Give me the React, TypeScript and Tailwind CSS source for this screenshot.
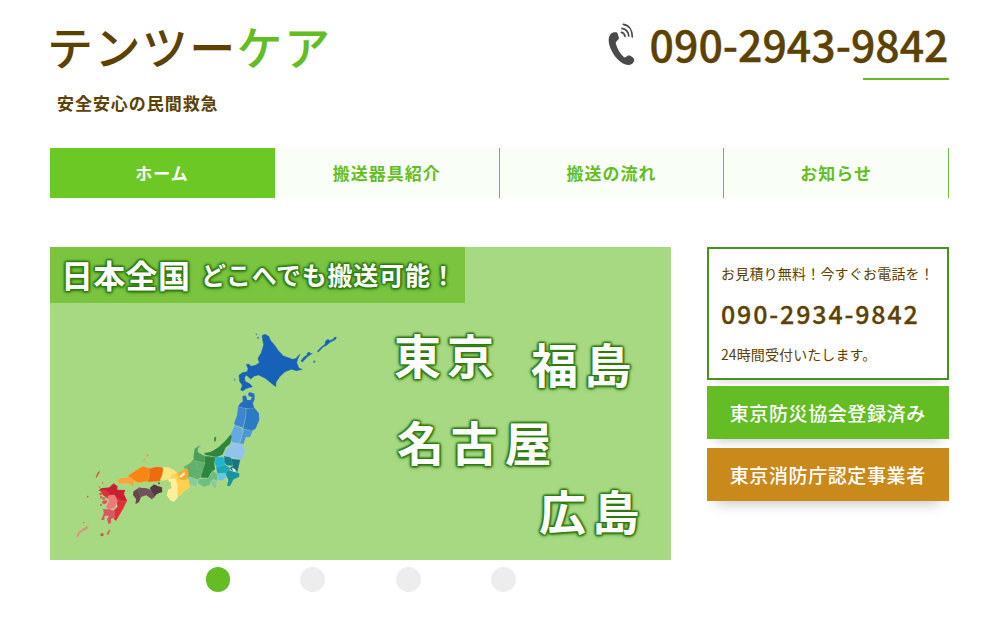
const navItems = ["ホーム", "搬送器具紹介", "搬送の流れ", "お知らせ"];

const outline =
  "[text-shadow:0_0_2px_#2f7a10,0_0_3px_#2f7a10,1px_1px_2px_#2f7a10,-1px_1px_2px_#2f7a10,1px_-1px_2px_#2f7a10,-1px_-1px_2px_#2f7a10,0_1px_4px_#2f7a10]";

function PhoneIcon() {
  return (
    <svg className="block h-[44px] w-[28px]" viewBox="0 0 84 132" aria-hidden="true">
      <path
        d="M8 33 C13 28 20 27 28 29 L33 45 C33 50 25 53 23 60 C27 77 36 92 48 103 C53 105 57 98 63 97 C70 99 77 105 79 110 C78 119 71 125 63 126 C52 127 38 119 26 106 C12 90 2 68 2 52 C2 44 4 38 8 33 Z"
        fill="#4a4a4c"
      />
      <g fill="none" stroke="#4a4a4c" strokeWidth="5" strokeLinecap="round">
        <path d="M40 28 C46 29 50 33 51 40" />
        <path d="M42 16 C53 18 61 26 62 39" />
        <path d="M46 4 C62 6 73 20 73 42" />
      </g>
    </svg>
  );
}

function JapanMap() {
  return (
    <svg className="absolute inset-0 h-[313px] w-[621px]" viewBox="50 247 621 313" aria-hidden="true">
      <g transform="translate(225 325) scale(0.33333)" fill="#1761b8" stroke="#1761b8" strokeWidth="1.5">
        <path d="M111 32 L120 28 L131 34 L137 47 L150 62 L159 76 L175 93 L190 98 L202 103 L212 101 L225 87 L218 102 L215 113 L222 130 L232 133 L215 137 L199 133 L180 140 L164 155 L153 172 L152 185 L141 176 L121 160 L101 150 L88 153 L77 162 L65 151 L59 156 L60 169 L75 177 L82 185 L71 188 L61 192 L54 198 L47 195 L52 181 L44 169 L42 151 L52 143 L67 140 L69 130 L64 119 L70 117 L79 124 L91 121 L103 113 L99 100 L109 83 L116 60 Z" />
        <path d="M228 108 L235 98 L246 90 L248 83 L254 82 L256 86 L262 85 L249 94 L241 102 L232 111 Z M277 79 L287 68 L300 58 L302 48 L309 43 L314 47 L326 42 L328 37 L334 37 L332 43 L315 52 L306 60 L294 66 L280 81 Z" />
        <g fillOpacity=".7" stroke="none">
          <circle cx="268" cy="110" r="3.5" />
          <circle cx="94" cy="28" r="2.5" />
          <circle cx="99" cy="38" r="3" />
          <circle cx="29" cy="164" r="2.5" />
        </g>
      </g>
      <g transform="translate(160 380) scale(0.33333)" stroke="#c8e4c4" strokeOpacity=".4" strokeWidth="1.3" strokeLinejoin="round">
        <path fill="#256dbd" d="M247 48 L258 46 L262 60 L271 60 L276 52 L265 48 L264 40 L270 36 L284 41 L284 58 L279 70 L284 87 L258 86 L233 81 L241 69 L248 65 Z" />
        <path fill="#3c86d1" d="M234 80 L259 86 L257 110 L249 144 L225 136 L222 130 L231 105 Z" />
        <path fill="#2a7bc4" d="M259 86 L284 84 L297 100 L298 121 L287 146 L276 153 L249 147 L257 112 Z" />
        <path fill="#65a9e3" d="M224 136 L248 146 L248 161 L238 192 L215 187 L209 169 L217 151 Z" />
        <path fill="#4c96d9" d="M250 147 L278 153 L270 172 L258 171 L251 192 L239 191 L247 164 Z" />
        <path fill="#91c4ed" d="M213 188 L239 192 L252 194 L256 216 L245 240 L220 234 L194 229 L193 215 L204 206 Z" />
        <path fill="#2e853d" d="M212 163 L216 170 L211 191 L197 203 L188 224 L169 232 L152 228 L135 225 L132 219 L153 215 L175 202 L195 183 Z" />
        <path fill="#2e853d" d="M162 173 L169 169 L168 182 L163 187 Z" />
        <path fill="#62b06d" d="M70 261 L91 248 L105 232 L103 206 L114 197 L125 196 L115 204 L113 216 L126 224 L134 230 L133 247 L116 260 L128 271 L126 287 L114 299 L93 293 L79 292 L82 278 Z" />
        <path fill="#4a9e58" d="M100 230 L104 207 L113 200 L114 217 L133 227 L152 228 L145 251 L102 242 Z" />
        <path fill="#62b06d" d="M104 242 L136 250 L130 273 L116 268 Z" />
        <path fill="#2e853d" d="M134 229 L168 231 L163 251 L166 267 L153 279 L145 294 L122 293 L128 271 L135 250 Z" />
        <path fill="#8acb9b" d="M88 290 L113 299 L110 322 L88 312 L86 301 Z" />
        <path fill="#70bd80" d="M116 297 L145 294 L158 272 L172 281 L172 304 L160 297 L148 316 L132 321 L113 310 Z" />
        <path fill="#8acb9b" d="M150 305 L165 300 L171 311 L168 328 L157 318 Z" />
        <path fill="#22b4ce" d="M166 231 L190 230 L198 248 L192 260 L170 264 L164 250 Z" />
        <path fill="#16808c" d="M192 228 L211 232 L218 240 L219 258 L199 256 L193 245 Z" />
        <path fill="#147681" d="M213 236 L241 239 L236 260 L232 278 L218 274 L208 264 L219 258 Z" />
        <path fill="#1ca6b7" d="M168 262 L196 254 L211 265 L204 281 L172 281 Z" />
        <path fill="#65c7e0" d="M171 282 L193 279 L204 284 L189 302 L173 300 Z" />
        <path fill="#15939f" d="M205 270 L227 277 L238 280 L238 290 L220 299 L210 319 L201 318 L205 300 L197 283 Z" />
        <path fill="#eefafa" d="M216 263 L224 267 L230 276 L219 274 Z" />
      </g>
      <g transform="translate(65 440) scale(0.33333)" stroke="#f2e5bb" strokeOpacity=".25" strokeWidth="1.2" strokeLinejoin="round">
        <path fill="#f8a63d" d="M158 121 L166 113 L184 114 L195 103 L214 91 L234 80 L251 86 L251 123 L225 128 L207 125 L205 140 L188 130 L162 132 Z" />
        <path fill="#f98513" d="M190 107 L213 91 L234 79 L253 85 L253 105 L246 123 L220 128 L206 119 Z" />
        <path fill="#ee6c0b" d="M252 86 L270 81 L287 81 L296 86 L295 98 L284 124 L247 126 L253 106 Z" />
        <path fill="#fce77c" d="M295 82 L310 82 L328 91 L338 101 L330 117 L316 113 L301 122 L286 120 L292 104 Z" />
        <path fill="#fed24e" d="M318 105 L338 97 L346 105 L353 117 L372 121 L373 144 L359 153 L343 170 L333 156 L322 125 Z" />
        <path fill="#f9a92c" d="M337 98 L354 91 L364 83 L370 95 L370 109 L361 121 L344 119 Z" />
        <path fill="#fffbe8" d="M343 109 L358 96 L359 104 L347 113 Z" />
        <path fill="#fdf09c" d="M309 117 L330 114 L337 133 L338 173 L327 185 L316 181 L305 166 L310 148 L321 145 L315 131 Z" />
        <path fill="#a5d880" d="M285 128 L303 120 L318 127 L316 140 L304 138 L299 148 L290 141 Z" />
        <path fill="#65484e" d="M205 154 L224 142 L235 149 L240 164 L228 172 L222 187 L211 193 L213 177 L204 166 Z" />
        <path fill="#715257" d="M218 143 L243 144 L262 151 L270 171 L260 178 L244 166 L227 171 Z" />
        <path fill="#513a40" d="M254 144 L267 133 L279 138 L291 142 L292 156 L276 162 L268 171 L262 158 Z" />
        <circle cx="282" cy="130" r="3" fill="#70404c" />
        <path fill="#c92031" d="M133 142 L146 130 L158 139 L157 149 L181 150 L177 162 L187 183 L171 187 L158 181 L149 167 L125 166 L113 156 L101 152 L107 145 Z" />
        <path fill="#df3039" d="M105 151 L124 152 L136 165 L128 176 L114 166 Z M150 172 L171 184 L186 183 L173 209 L153 243 L146 236 L146 211 L158 200 Z" />
        <path fill="#ed7b7c" d="M128 168 L148 164 L158 184 L149 204 L132 209 L123 202 L131 184 Z" />
        <path fill="#d75763" d="M114 207 L132 208 L149 212 L149 231 L138 238 L139 248 L130 253 L126 238 L131 227 L119 228 L118 241 L108 239 L116 222 Z" />
        <g fill="#e0505a" stroke="none">
          <path fill="#c9693d" d="M92 110 L98 97 L105 92 L103 100 L94 114 Z" />
          <path d="M106 169 L112 168 L109 177 L105 174 Z M111 184 L124 180 L127 187 L119 193 L112 190 Z" />
          <path fill="#dd9180" d="M35 288 L39 277 L49 271 L55 264 L60 264 L64 257 L71 261 L63 271 L53 273 L44 281 L37 295 Z" />
          <path fill="#d0714a" d="M124 282 L133 268 L136 272 L130 285 Z" />
          <circle cx="107" cy="162" r="4" /><circle cx="116" cy="176" r="4" />
          <circle cx="108" cy="195" r="3" /><circle cx="103" cy="141" r="2" />
          <circle cx="113" cy="129" r="2" /><circle cx="68" cy="170" r="2.5" />
          <circle cx="56" cy="248" r="2" /><circle cx="111" cy="284" r="5" fill="#cc5a3c" />
        </g>
        <g fill="#e29a58" stroke="none">
          <circle cx="248" cy="46" r="3.5" /><circle cx="239" cy="59" r="2.5" />
          <circle cx="235" cy="64" r="2" /><circle cx="245" cy="66" r="1.5" />
        </g>
      </g>
    </svg>
  );
}

export default function App() {
  return (
    <div className="h-[618px] w-[1000px] overflow-hidden bg-white px-[50px] font-['Noto_Sans_CJK_JP',sans-serif] text-[#5c4200]">
      <header className="flex h-[147px] justify-between">
        <div className="pt-[21px]">
          <h1 className="-ml-[3px] text-[46px] leading-[48px] font-medium tracking-[1.4px] whitespace-nowrap">
            テンツー<span className="text-[#65bd25]">ケア</span>
          </h1>
          <p className="mt-[22px] ml-[7px] text-[17px] leading-6 font-bold tracking-[0.95px]">安全安心の民間救急</p>
        </div>
        <div className="flex flex-col items-end pt-[19px]">
          <div className="mr-[1.5px] flex h-[50px]">
            <div className="pt-[4px]">
              <PhoneIcon />
            </div>
            <p className="ml-[14px] text-[42.8px] leading-[48px] font-medium whitespace-nowrap [-webkit-text-stroke:0.4px_#5c4200]">
              090-2943-9842
            </p>
          </div>
          <div className="mt-[9px] mr-px h-[2px] w-[86px] bg-[#65bd25]" />
        </div>
      </header>

      <nav className="flex h-[51px] w-[899px] pt-px">
        {navItems.map((label, i) => (
          <a
            key={label}
            className={
              i === 0
                ? "flex w-[225px] items-center justify-center bg-[#6bc825] pr-px pb-px text-[17px] font-bold tracking-[1px] text-white"
                : "flex flex-1 items-center justify-center border-r border-[#74b948] bg-[#f9fff7] pb-px text-[17px] font-bold tracking-[1px] text-[#65bd25]"
            }
          >
            {label}
          </a>
        ))}
      </nav>

      <main className="mt-[49px] flex">
        <section className="w-[621px]">
          <div className="relative h-[313px] bg-[#a7d982] font-bold text-white">
            <JapanMap />
            <div className={`relative flex h-[56px] w-[415px] items-center bg-[#7bc440] pb-[2px] whitespace-nowrap ${outline}`}>
              <span className="ml-[11px] w-[140px] text-[32px] leading-[52px] tracking-[0.3px]">日本全国</span>
              <span className="pt-px text-[25px] leading-[51px] tracking-[0.8px]">どこへでも搬送可能！</span>
            </div>
            <span className={`absolute top-[83px] left-[344px] text-[47px] leading-[47px] tracking-[6px] ${outline}`}>東京</span>
            <span className={`absolute top-[92px] left-[481px] text-[47px] leading-[47px] tracking-[6.5px] ${outline}`}>福島</span>
            <span className={`absolute top-[170px] left-[347px] text-[47px] leading-[47px] tracking-[6.7px] ${outline}`}>名古屋</span>
            <span className={`absolute top-[239px] left-[489px] text-[47px] leading-[47px] tracking-[6.5px] ${outline}`}>広島</span>
          </div>
          <div className="mt-[7px] ml-[155.5px] flex items-center gap-[70.3px]">
            <i className="size-[24.5px] shrink-0 rounded-full bg-[#65bd25]" />
            <i className="size-[25px] shrink-0 rounded-full bg-[#ededed]" />
            <i className="size-[25px] shrink-0 rounded-full bg-[#ededed]" />
            <i className="size-[25px] shrink-0 rounded-full bg-[#ededed]" />
          </div>
        </section>

        <aside className="ml-[35.5px] w-[242.5px]">
          <div className="h-[133px] border-2 border-[#47921d] bg-white pt-[14px] pl-[12.5px] whitespace-nowrap shadow-[0_8px_10px_-8px_rgba(0,0,0,0.2)]">
            <p className="text-[14px] leading-5 tracking-[0.2px]">お見積り無料！今すぐお電話を！</p>
            <p className="mt-[12px] text-[25px] leading-[36px] font-medium tracking-[1.85px] [-webkit-text-stroke:0.3px_#5c4200]">
              090-2934-9842
            </p>
            <p className="mt-[13px] text-[14px] leading-5 tracking-[0.1px]">24時間受付いたします。</p>
          </div>
          <div className="mt-[6px] flex h-[53px] items-center justify-center bg-[#65bd25] pt-[2px] text-[19px] font-medium tracking-[0.6px] text-white shadow-[0_9px_12px_-8px_rgba(0,0,0,0.25)]">
            東京防災協会登録済み
          </div>
          <div className="mt-[9px] flex h-[53px] items-center justify-center bg-[#c9891b] pt-[2px] text-[19px] font-medium tracking-[0.6px] text-white shadow-[0_11px_14px_-9px_rgba(0,0,0,0.25)]">
            東京消防庁認定事業者
          </div>
        </aside>
      </main>
    </div>
  );
}
